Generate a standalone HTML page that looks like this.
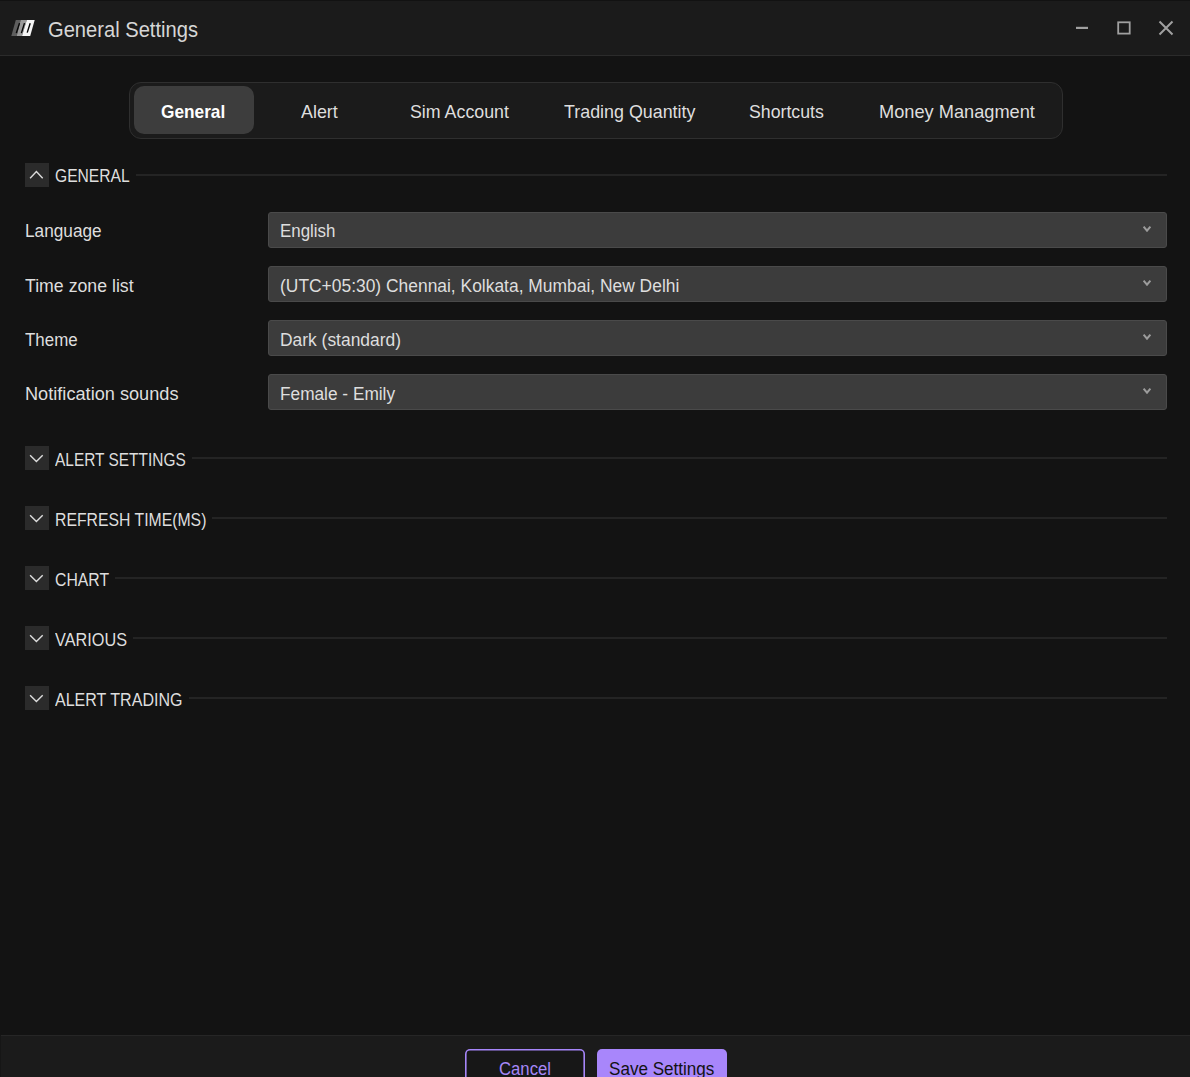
<!DOCTYPE html>
<html><head><meta charset="utf-8">
<style>
*{margin:0;padding:0;box-sizing:border-box}
html,body{width:1190px;height:1077px;overflow:hidden;background:#131313;font-family:"Liberation Sans",sans-serif;color:#dedede}
.a{position:absolute}
.t{position:absolute;white-space:nowrap;line-height:1;transform-origin:0 0}
#top{left:0;top:0;width:1190px;height:1px;background:#121212}
#tbar{left:0;top:1px;width:1190px;height:54px;background:#1b1b1b}
#tline{left:0;top:55px;width:1190px;height:1px;background:#2b2b2b}
#tabs{left:129px;top:82px;width:934px;height:57px;background:#1b1b1b;border:1px solid #2f2f2f;border-radius:12px}
#act{left:134px;top:86px;width:120px;height:48px;background:#3d3d3d;border-radius:10px}
.box{width:24px;height:24px;background:#2b2b2b;left:25px}
.hl{height:2px;background:#242424}
.dd{left:268px;width:899px;height:36px;background:#3c3c3c;border:1px solid #4a4a4a;border-radius:3px}
#foot{left:0;top:1035px;width:1190px;height:42px;background:#1b1b1b;border-top:1px solid #262626}
#cancel{left:465px;top:1048.6px;width:120px;height:40px;box-shadow:inset 0 0 0 1.6px #a686f9;border-radius:5px;background:#171717}
#save{left:597px;top:1048.6px;width:130px;height:40px;background:#a886fb;border-radius:5px}
</style></head><body>
<div class="a" id="top"></div>
<div class="a" id="tbar"></div>
<div class="a" id="tline"></div>
<svg class="a" style="left:8px;top:16px" width="30" height="24" viewBox="0 0 30 24">
  <polygon points="7.8,4 12.7,4 8.7,19.9 3.3,19.9" fill="#5e5e5e"/>
  <polygon points="12.7,4 18.8,4 14,19.9 8.7,19.9" fill="#9a9a9a"/>
  <polygon points="18.8,4 26.7,4 22.2,19.9 14,19.9" fill="#f5f5f5"/>
  <path d="M11.5 7.1 L8.3 17.1 M16.5 7.1 L13.4 17.1 M22.2 7.3 L19.2 16.6" stroke="#050505" stroke-width="1.4" fill="none"/>
</svg>
<svg class="a" style="left:1070px;top:15px" width="110" height="26" viewBox="0 0 110 26">
  <rect x="6" y="11.8" width="12" height="2.2" fill="#a0a0a0"/>
  <rect x="48.2" y="7.3" width="11.5" height="11.3" fill="none" stroke="#a0a0a0" stroke-width="1.8"/>
  <path d="M89.5 6.5 L102.5 19.5 M102.5 6.5 L89.5 19.5" stroke="#a0a0a0" stroke-width="2" fill="none"/>
</svg>
<div class="a" id="tabs"></div>
<div class="a" id="act"></div>

<div class="a box" style="top:163px"></div>
<svg class="a" style="left:25px;top:163px" width="24" height="24" viewBox="0 0 24 24"><path d="M5.1 15.2 L11.4 8.6 L17.7 15.2" stroke="#dcdcdc" stroke-width="1.4" fill="none"/></svg>
<div class="a hl" style="left:136px;top:174px;width:1031px"></div>

<div class="a dd" style="top:212px"></div>
<div class="a dd" style="top:266px"></div>
<div class="a dd" style="top:320px"></div>
<div class="a dd" style="top:374px"></div>
<svg class="a" style="left:1140px;top:222px" width="14" height="200" viewBox="0 0 14 200">
  <path d="M3.6 4.6 L7 8.7 L10.4 4.6 M3.6 58.6 L7 62.7 L10.4 58.6 M3.6 112.6 L7 116.7 L10.4 112.6 M3.6 166.6 L7 170.7 L10.4 166.6" stroke="#9c9c9c" stroke-width="2" fill="none"/>
</svg>

<div class="a box" style="top:446px"></div>
<div class="a box" style="top:506px"></div>
<div class="a box" style="top:566px"></div>
<div class="a box" style="top:626px"></div>
<div class="a box" style="top:686px"></div>
<svg class="a" style="left:25px;top:446px" width="24" height="264" viewBox="0 0 24 264">
  <path d="M5.1 9.2 L11.4 15.5 L17.7 9.2 M5.1 69.2 L11.4 75.5 L17.7 69.2 M5.1 129.2 L11.4 135.5 L17.7 129.2 M5.1 189.2 L11.4 195.5 L17.7 189.2 M5.1 249.2 L11.4 255.5 L17.7 249.2" stroke="#dcdcdc" stroke-width="1.4" fill="none"/>
</svg>
<div class="a hl" style="left:192px;top:457px;width:975px"></div>
<div class="a hl" style="left:212px;top:517px;width:955px"></div>
<div class="a hl" style="left:115px;top:577px;width:1052px"></div>
<div class="a hl" style="left:133px;top:637px;width:1034px"></div>
<div class="a hl" style="left:189px;top:697px;width:978px"></div>

<div class="a" id="foot"></div>
<div class="a" style="left:0;top:1035px;width:1px;height:42px;background:#161616"></div>
<div class="a" id="cancel"></div>
<div class="a" id="save"></div>
<div class="t" style="left:47.90px;top:19.00px;font-size:22.09px;transform:scaleX(0.9121);color:#d6d6d6;">General Settings</div>
<div class="t" style="left:161.00px;top:102.85px;font-size:18.60px;transform:scaleX(0.9281);color:#ffffff;font-weight:bold;">General</div>
<div class="t" style="left:301.00px;top:102.85px;font-size:18.60px;transform:scaleX(0.9621);color:#dedede;">Alert</div>
<div class="t" style="left:409.60px;top:102.85px;font-size:18.60px;transform:scaleX(0.9574);color:#dedede;">Sim Account</div>
<div class="t" style="left:563.90px;top:102.85px;font-size:18.60px;transform:scaleX(0.9609);color:#dedede;">Trading Quantity</div>
<div class="t" style="left:749.10px;top:102.85px;font-size:18.60px;transform:scaleX(0.9531);color:#dedede;">Shortcuts</div>
<div class="t" style="left:878.80px;top:102.85px;font-size:18.60px;transform:scaleX(0.9796);color:#dedede;">Money Managment</div>
<div class="t" style="left:54.90px;top:166.73px;font-size:18.75px;transform:scaleX(0.8336);color:#dedede;">GENERAL</div>
<div class="t" style="left:54.90px;top:451.23px;font-size:18.75px;transform:scaleX(0.8235);color:#dedede;">ALERT SETTINGS</div>
<div class="t" style="left:54.90px;top:511.23px;font-size:18.75px;transform:scaleX(0.8417);color:#dedede;">REFRESH TIME(MS)</div>
<div class="t" style="left:54.90px;top:571.03px;font-size:18.75px;transform:scaleX(0.8422);color:#dedede;">CHART</div>
<div class="t" style="left:54.90px;top:631.03px;font-size:18.75px;transform:scaleX(0.8686);color:#dedede;">VARIOUS</div>
<div class="t" style="left:54.90px;top:691.03px;font-size:18.75px;transform:scaleX(0.8557);color:#dedede;">ALERT TRADING</div>
<div class="t" style="left:25.40px;top:222.23px;font-size:18.75px;transform:scaleX(0.9183);color:#dedede;">Language</div>
<div class="t" style="left:25.40px;top:277.03px;font-size:18.75px;transform:scaleX(0.9447);color:#dedede;">Time zone list</div>
<div class="t" style="left:25.40px;top:331.03px;font-size:18.75px;transform:scaleX(0.9015);color:#dedede;">Theme</div>
<div class="t" style="left:25.40px;top:385.03px;font-size:18.75px;transform:scaleX(0.9690);color:#dedede;">Notification sounds</div>
<div class="t" style="left:280.30px;top:221.73px;font-size:18.75px;transform:scaleX(0.9024);color:#dedede;">English</div>
<div class="t" style="left:280.30px;top:276.53px;font-size:18.75px;transform:scaleX(0.9289);color:#dedede;">(UTC+05:30) Chennai, Kolkata, Mumbai, New Delhi</div>
<div class="t" style="left:280.30px;top:330.93px;font-size:18.75px;transform:scaleX(0.9289);color:#dedede;">Dark (standard)</div>
<div class="t" style="left:280.30px;top:384.93px;font-size:18.75px;transform:scaleX(0.9206);color:#dedede;">Female - Emily</div>
<div class="t" style="left:498.70px;top:1059.83px;font-size:18.75px;transform:scaleX(0.8909);color:#a687f8;">Cancel</div>
<div class="t" style="left:609.00px;top:1059.83px;font-size:18.75px;transform:scaleX(0.9111);color:#121212;">Save Settings</div>
</body></html>
